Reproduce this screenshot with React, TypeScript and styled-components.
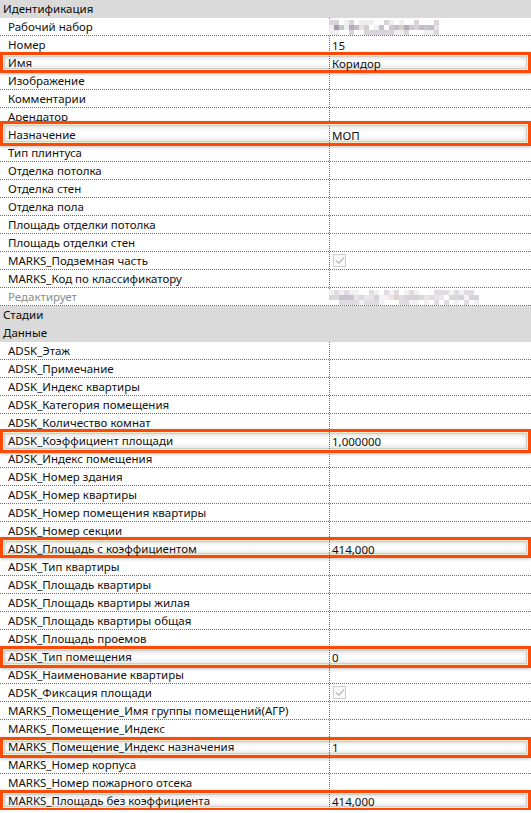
import React from "react";
import styled, { createGlobalStyle } from "styled-components";

const Global = createGlobalStyle`
  html, body { margin: 0; padding: 0; background: #ffffff; }
  body { font-family: "Noto Sans", "Open Sans", sans-serif; }
`;

type Row =
  | { kind: "header"; label: string }
  | {
      kind: "prop";
      label: string;
      value?: string;
      check?: boolean;
      blur?: "a" | "b";
      muted?: boolean;
      hl?: [number, number];
    };

const rows: Row[] = [
  { kind: "header", label: "Идентификация" },
  { kind: "prop", label: "Рабочий набор", blur: "a" },
  { kind: "prop", label: "Номер", value: "15" },
  { kind: "prop", label: "Имя", value: "Коридор", hl: [-2, -1] },
  { kind: "prop", label: "Изображение" },
  { kind: "prop", label: "Комментарии" },
  { kind: "prop", label: "Арендатор" },
  { kind: "prop", label: "Назначение", value: "МОП", hl: [-5, -2] },
  { kind: "prop", label: "Тип плинтуса" },
  { kind: "prop", label: "Отделка потолка" },
  { kind: "prop", label: "Отделка стен" },
  { kind: "prop", label: "Отделка пола" },
  { kind: "prop", label: "Площадь отделки потолка" },
  { kind: "prop", label: "Площадь отделки стен" },
  { kind: "prop", label: "MARKS_Подземная часть", check: true },
  { kind: "prop", label: "MARKS_Код по классификатору" },
  { kind: "prop", label: "Редактирует", muted: true, blur: "b" },
  { kind: "header", label: "Стадии" },
  { kind: "header", label: "Данные" },
  { kind: "prop", label: "ADSK_Этаж" },
  { kind: "prop", label: "ADSK_Примечание" },
  { kind: "prop", label: "ADSK_Индекс квартиры" },
  { kind: "prop", label: "ADSK_Категория помещения" },
  { kind: "prop", label: "ADSK_Количество комнат" },
  { kind: "prop", label: "ADSK_Коэффициент площади", value: "1,000000", hl: [-3, -3] },
  { kind: "prop", label: "ADSK_Индекс помещения" },
  { kind: "prop", label: "ADSK_Номер здания" },
  { kind: "prop", label: "ADSK_Номер квартиры" },
  { kind: "prop", label: "ADSK_Номер помещения квартиры" },
  { kind: "prop", label: "ADSK_Номер секции" },
  { kind: "prop", label: "ADSK_Площадь с коэффициентом", value: "414,000", hl: [-3, 0] },
  { kind: "prop", label: "ADSK_Тип квартиры" },
  { kind: "prop", label: "ADSK_Площадь квартиры" },
  { kind: "prop", label: "ADSK_Площадь квартиры жилая" },
  { kind: "prop", label: "ADSK_Площадь квартиры общая" },
  { kind: "prop", label: "ADSK_Площадь проемов" },
  { kind: "prop", label: "ADSK_Тип помещения", value: "0", hl: [-2, -2] },
  { kind: "prop", label: "ADSK_Наименование квартиры" },
  { kind: "prop", label: "ADSK_Фиксация площади", check: true },
  { kind: "prop", label: "MARKS_Помещение_Имя группы помещений(АГР)" },
  { kind: "prop", label: "MARKS_Помещение_Индекс" },
  { kind: "prop", label: "MARKS_Помещение_Индекс назначения", value: "1", hl: [-1, -2] },
  { kind: "prop", label: "MARKS_Номер корпуса" },
  { kind: "prop", label: "MARKS_Номер пожарного отсека" },
  { kind: "prop", label: "MARKS_Площадь без коэффициента", value: "414,000", hl: [-2, -1] },
];

const Panel = styled.div`
  width: 531px;
  display: flex;
  flex-direction: column;
  font-size: 11.5px;
  color: #111111;
`;

const HeaderRow = styled.div`
  height: 18px;
  line-height: 18px;
  background: #dadada;
  padding-left: 3px;
  color: #0a0a0a;
  white-space: nowrap;
`;

const PropRow = styled.div<{ $raised: boolean }>`
  position: relative;
  z-index: ${(p) => (p.$raised ? 2 : 1)};
  height: 18px;
  box-sizing: border-box;
  display: grid;
  grid-template-columns: 329px 1fr;
  background-image: repeating-linear-gradient(
    to right,
    #6f6f6f 0 1px,
    transparent 1px 2px
  );
  background-size: 100% 1px;
  background-position: 0 100%;
  background-repeat: no-repeat;
`;

const Label = styled.div<{ $muted: boolean }>`
  position: relative;
  z-index: 1;
  padding-left: 8px;
  line-height: 17px;
  white-space: nowrap;
  overflow: hidden;
  color: ${(p) => (p.$muted ? "#8c8c8c" : "#111111")};
`;

const Value = styled.div`
  position: relative;
  z-index: 1;
  padding-left: 3px;
  line-height: 17px;
  white-space: nowrap;
  display: flex;
  align-items: center;
  background-image: repeating-linear-gradient(
    to bottom,
    #6f6f6f 0 1px,
    transparent 1px 2px
  );
  background-size: 1px 100%;
  background-repeat: no-repeat;
  background-position: 0 0;
`;

const Highlight = styled.div<{ $top: number; $bottom: number }>`
  position: absolute;
  left: 0;
  right: 0;
  top: ${(p) => p.$top}px;
  bottom: ${(p) => p.$bottom}px;
  z-index: 0;
  border: 3px solid #ff4a06;
  background: linear-gradient(#f0f0f0, #ffffff 45%, #f6f6f6);
  box-shadow: inset 0 0 0 1px #f3eccb, inset 0 0 0 2px #cfcfcf,
    inset 0 0 5px 2px rgba(0, 0, 0, 0.12), 0 1px 3px rgba(0, 0, 0, 0.25);
`;

const CheckBox = styled.span`
  width: 11px;
  height: 11px;
  border: 1px solid #cdcdcd;
  background: #fbfbfb;
  display: inline-flex;
  align-items: center;
  justify-content: center;
  margin-left: 1px;
  margin-top: -1px;
`;

const palA = ["#ffffff", "#f1eef2", "#d9d3dc", "#c6bcc6", "#bfc6cc", "#b5aab6", "#d4d0c8", "#e6e2ea", "#a89aa6", "#cac9d3"];
const palB = ["#ffffff", "#f2f2f2", "#e2dce2", "#d8d2da", "#cfd3d8", "#ddd7d0", "#e9e6ec", "#c9c4cf", "#ece3e3", "#d6dbde"];

function Mosaic({ cols, rowsN, seed, pal, width }: { cols: number; rowsN: number; seed: number; pal: string[]; width: number }) {
  const rects: React.ReactNode[] = [];
  let s = seed;
  const rnd = () => {
    s = (s * 9301 + 49297) % 233280;
    return s / 233280;
  };
  const cw = width / cols;
  for (let r = 0; r < rowsN; r++) {
    for (let c = 0; c < cols; c++) {
      const edge = r === 0 || r === rowsN - 1;
      const idx = edge ? Math.floor(rnd() * 3) : Math.floor(rnd() * pal.length);
      rects.push(
        <rect key={`${r}-${c}`} x={c * cw} y={r * 5} width={cw + 0.5} height={5} fill={pal[idx]} />
      );
    }
  }
  return (
    <svg width={width} height={rowsN * 5} style={{ display: "block" }}>
      {rects}
    </svg>
  );
}

const BlurWrap = styled.div`
  margin-left: -3px;
`;

function Check() {
  return (
    <CheckBox>
      <svg width="10" height="9" viewBox="0 0 10 9">
        <path d="M1 4.5 L3.8 7.3 L9 1.5" fill="none" stroke="#bdbdbd" strokeWidth="1.4" />
      </svg>
    </CheckBox>
  );
}

export default function App() {
  return (
    <>
      <Global />
      <Panel>
        {rows.map((r, i) => {
          if (r.kind === "header") return <HeaderRow key={i}>{r.label}</HeaderRow>;
          return (
            <PropRow key={i} $raised={!!r.hl}>
              {r.hl && <Highlight $top={r.hl[0]} $bottom={r.hl[1]} />}
              <Label $muted={!!r.muted}>{r.label}</Label>
              <Value>
                {r.value}
                {r.check && <Check />}
                {r.blur === "a" && (
                  <BlurWrap>
                    <Mosaic cols={22} rowsN={3} seed={17} pal={palA} width={110} />
                  </BlurWrap>
                )}
                {r.blur === "b" && (
                  <BlurWrap>
                    <Mosaic cols={30} rowsN={3} seed={5} pal={palB} width={150} />
                  </BlurWrap>
                )}
              </Value>
            </PropRow>
          );
        })}
      </Panel>
    </>
  );
}
